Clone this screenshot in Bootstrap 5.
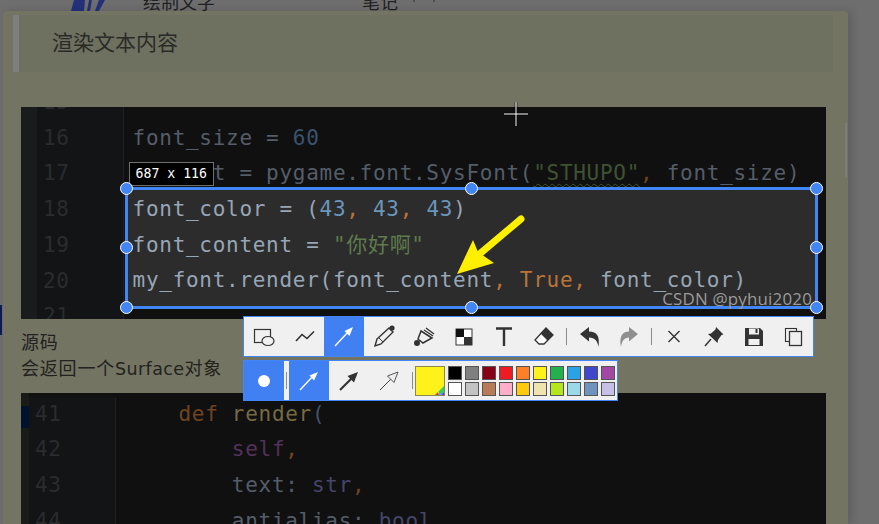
<!DOCTYPE html>
<html lang="zh">
<head>
<meta charset="utf-8">
<title>渲染文本内容</title>
<link href="https://cdn.jsdelivr.net/npm/bootstrap@5.3.0/dist/css/bootstrap.min.css" rel="stylesheet">
<style>
html,body{height:524px;overflow:hidden;}
body{background:#6e6e6e;font-family:"Liberation Sans","Noto Sans CJK SC",sans-serif;color:#252520;position:relative;}
.back-strip{height:11px;overflow:hidden;font-size:18px;line-height:18px;color:#222;}
.back-logo{width:34px;margin-left:71px;}
.back-a{margin-left:38px;margin-top:-6px;}
.back-b{margin-left:147px;margin-top:-6px;}
.back-c{margin-left:15px;margin-top:-9px;}
.sheet{margin-left:3px;width:845px;height:513px;background:#737462;border-radius:4px 4px 0 0;box-shadow:4px 0 8px rgba(0,0,0,.14);padding:4px 0 0 10px;position:relative;overflow:hidden;}
.quote-box{width:820px;height:57px;background:#6e7060;border-left:6px solid #7d7f80;padding-left:33px;font-size:21px;line-height:52px;color:#2a2b26;margin-bottom:35px;font-family:"Noto Sans CJK SC",sans-serif;font-weight:400;}
.code-box{margin-left:8px;width:805px;background:#101010;overflow:hidden;font-family:"DejaVu Sans Mono","Noto Sans CJK SC",monospace;font-size:21px;line-height:35.7px;letter-spacing:.71px;white-space:pre;color:#545d68;}
.code-one{height:212px;}
.code-two{height:132px;}
.strip-one{width:16px;background:#1a1b1d;}
.strip-two{width:8px;background:#1a1a17;position:relative;}
.strip-mark{height:22px;margin-top:13px;background:#02122c;}
.nums{background:#131415;border-right:1px solid #1f2021;color:#2a2c2e;}
.nums-one{width:87px;padding:0 0 0 6px;margin-top:-22px;}
.nums-two{width:87px;padding:0 0 0 6px;margin-top:3.5px;}
.code-one .body-lines{padding-left:8.6px;margin-top:-22px;}
.code-two .body-lines{padding-left:9px;margin-top:3.5px;}
.c-num{color:#3a536c;}
.c-str{color:#3f5233;text-decoration:underline wavy #3f5a2c 1px;text-underline-offset:3px;}
.c-or{color:#6f4420;}
.c-fn{color:#766a44;}
.c-pa{color:#41536a;}
.c-se{color:#55315a;}
.c-ty{color:#46456a;}
.text-block{font-size:18px;letter-spacing:.8px;line-height:26px;padding:9px 0 11px 8px;color:#22221e;font-family:"Noto Sans CJK SC",sans-serif;font-weight:400;}
.text-block .latin{font-family:"DejaVu Sans",sans-serif;font-size:17.5px;letter-spacing:.4px;}
.scroll-thumb{position:absolute;left:842px;top:112px;width:2px;height:54px;background:#7e7e78;}
.selection{position:absolute;left:125px;top:187px;width:693px;height:122px;border:3px solid #4285f4;background:#2c2c2c;font-family:"DejaVu Sans Mono","Noto Sans CJK SC",monospace;font-size:21px;line-height:35.7px;letter-spacing:.71px;white-space:pre;color:#98a5b4;padding:2px 0 0 4.6px;}
.s-num{color:#6a96bb;}
.s-or{color:#b9743a;}
.s-str{color:#5f7a4d;}
.watermark{position:absolute;right:3px;bottom:-5px;font-family:"Open Sans",sans-serif;font-size:16.9px;line-height:24px;letter-spacing:.2px;color:#9a9a9a;}
.handle{position:absolute;width:13px;height:13px;border-radius:50%;background:#4285f4;border:1.5px solid #fff;}
.size-tag{position:absolute;left:129px;top:162px;width:84.5px;height:24px;background:#000;border:1px solid #707070;color:#fff;font-family:"DejaVu Sans Mono",monospace;font-size:13.2px;line-height:22px;text-align:center;letter-spacing:0;}
.arrow-ink{position:absolute;left:440px;top:200px;}
.cross{position:absolute;left:504px;top:102px;}
.tool-bar{position:absolute;left:243px;background:#f0f0f0;border:1px solid #4285f4;}
.bar-top{top:316px;width:571px;height:41px;}
.bar-sub{top:360px;width:375px;height:41px;}
.tool{width:40px;height:39px;flex:none;}
.tool-on{background:#4080f2;}
.tool-narrow{width:38px;}
.tool-end{width:39px;overflow:hidden;}
.tool-sep{width:1px;height:17px;background:#8a8a8a;flex:none;}
.gap-l2{margin-left:2px;}
.gap-l3{margin-left:3px;}
.big-swatch{width:30px;height:30px;background:#fff21a;border:1px solid #8a8a50;position:relative;flex:none;overflow:hidden;}
.swatch-grid{display:grid;grid-template-columns:repeat(10,14px);grid-template-rows:14px 14px;gap:2px 3px;}
.swatch{border:1px solid #555;}
.edge-mark{position:absolute;left:0;top:305px;width:2px;height:30px;background:#101a52;}
</style>
</head>
<body>
<div class="back-strip d-flex">
  <svg class="back-logo flex-none" width="34" height="11" viewBox="0 0 34 11"><path d="M0 11 3 0H14L13 11ZM16 11 18 0H21L19 11ZM24 11 28 0H34L28 11Z" fill="#24307a"/></svg>
  <div class="back-a">绘制文字</div>
  <div class="back-b">笔记</div>
  <svg class="back-c" width="22" height="11" viewBox="0 0 22 11"><path d="M1 0V11M21 0V11M1 2H21M6 7H16" stroke="#333" fill="none"/></svg>
</div>
<div class="sheet">
  <div class="quote-box">渲染文本内容</div>
  <div class="code-box code-one d-flex">
    <div class="strip-one"></div>
    <div class="nums nums-one">15
16
17
18
19
20
21</div>
    <div class="body-lines">
font_size = <span class="c-num">60</span>
my_font = pygame.font.SysFont(<span class="c-str">"STHUPO"</span><span class="c-or">,</span> font_size)</div>
  </div>
  <div class="text-block">源码<br>会返回一个<span class="latin">Surface</span>对象</div>
  <div class="code-box code-two d-flex">
    <div class="strip-two"><div class="strip-mark"></div></div>
    <div class="nums nums-two">41
42
43
44</div>
    <div class="body-lines">    <span class="c-or">def</span> <span class="c-fn">render</span><span class="c-pa">(</span>
        <span class="c-se">self</span><span class="c-or">,</span>
        text: <span class="c-ty">str</span><span class="c-or">,</span>
        antialias: <span class="c-ty">bool</span></div>
  </div>
  <div class="scroll-thumb"></div>
</div>
<div class="edge-mark"></div>

<svg class="cross" width="24" height="24" viewBox="0 0 24 24"><path d="M12 0V24M0 12H24" stroke="#000" stroke-width="3" opacity=".55"/><path d="M12 0V24M0 12H24" stroke="#fff" stroke-width="1"/></svg>
<div class="size-tag">687 x 116</div>
<div class="selection">font_color = (<span class="s-num">43</span><span class="s-or">,</span> <span class="s-num">43</span><span class="s-or">,</span> <span class="s-num">43</span>)
font_content = <span class="s-str">"你好啊"</span>
my_font.render(font_content<span class="s-or">,</span> <span class="s-or">True,</span> font_color)<span class="watermark">CSDN @pyhui2020</span></div>
<span class="handle" style="left:120px;top:181.5px"></span>
<span class="handle" style="left:465px;top:181.5px"></span>
<span class="handle" style="left:810px;top:181.5px"></span>
<span class="handle" style="left:120px;top:241px"></span>
<span class="handle" style="left:810px;top:241px"></span>
<span class="handle" style="left:120px;top:300.5px"></span>
<span class="handle" style="left:465px;top:300.5px"></span>
<span class="handle" style="left:810px;top:300.5px"></span>
<svg class="arrow-ink" width="90" height="80" viewBox="440 200 90 80"><path d="M521 219 476 257" stroke="#ffef00" stroke-width="7" stroke-linecap="round" fill="none"/><path d="M457 274 473 240 478 252 494 263Z" fill="#ffef00"/></svg>

<div class="tool-bar bar-top d-flex align-items-center">
  <span class="tool d-flex"><svg width="40" height="39" viewBox="0 0 40 39"><rect x="10.5" y="12.5" width="16" height="13" fill="none" stroke="#333" stroke-width="1.2"/><ellipse cx="24" cy="24" rx="6" ry="4.5" fill="#f0f0f0" stroke="#333" stroke-width="1.2"/></svg></span>
  <span class="tool d-flex"><svg width="40" height="39" viewBox="0 0 40 39"><path d="M12 24 18 17.5 23 21.5 30 14.5" fill="none" stroke="#333" stroke-width="1.6"/></svg></span>
  <span class="tool tool-on d-flex"><svg width="40" height="39" viewBox="0 0 40 39"><path d="M11 29 25 14" stroke="#fff" stroke-width="1.4"/><path d="M29 10 20.5 14 25.5 19Z" fill="#fff"/></svg></span>
  <span class="tool d-flex"><svg width="40" height="39" viewBox="0 0 40 39"><path d="M13 22 25 11 29 15 17 27 11 29Z" fill="none" stroke="#333" stroke-width="1.4"/><circle cx="28" cy="11" r="2.6" fill="#333"/><path d="M15 21 19 25" stroke="#333"/></svg></span>
  <span class="tool d-flex"><svg width="40" height="39" viewBox="0 0 40 39"><path d="M17 14 28 21 19 26 14 22Z" fill="none" stroke="#333" stroke-width="1.5"/><path d="M22 11 30 17M20 13 29 19" stroke="#333" stroke-width="1.3"/><circle cx="13" cy="26" r="3" fill="#333"/></svg></span>
  <span class="tool d-flex"><svg width="40" height="39" viewBox="0 0 40 39"><rect x="12" y="12" width="16" height="16" fill="#fff" stroke="#333"/><rect x="12" y="12" width="8" height="8" fill="#111"/><rect x="20" y="20" width="8" height="8" fill="#333"/></svg></span>
  <span class="tool d-flex"><svg width="40" height="39" viewBox="0 0 40 39"><path d="M12 11.5H28M20 11.5V29" fill="none" stroke="#333" stroke-width="2.4"/></svg></span>
  <span class="tool d-flex"><svg width="40" height="39" viewBox="0 0 40 39"><path d="M22 11 29 18 20 27 15 27 11 23Z" fill="#fff" stroke="#333" stroke-width="1.3"/><path d="M22 11 29 18 23.5 23.5 16.5 16.5Z" fill="#333"/></svg></span>
  <span class="tool-sep gap-l2"></span>
  <span class="tool tool-narrow gap-l3 d-flex"><svg width="38" height="39" viewBox="0 0 38 39"><path d="M10 17 19 10V14.500C27 14.500 30 19 28.500 30 27.500 24 25 20.500 19 20.500V24.500Z" fill="#333"/></svg></span>
  <span class="tool d-flex"><svg width="40" height="39" viewBox="0 0 40 39"><path d="M30 17 21 10V14.500C14 14.500 11 20 13 30 14 24 16 20.500 21 20.500V24.500Z" fill="#8f8f8f"/></svg></span>
  <span class="tool-sep gap-l3"></span>
  <span class="tool d-flex gap-l2"><svg width="40" height="39" viewBox="0 0 40 39"><path d="M14.500 14 25.500 25M25.500 14 14.500 25" stroke="#333" stroke-width="1.4"/></svg></span>
  <span class="tool d-flex"><svg width="40" height="39" viewBox="0 0 40 39"><path d="M22 10 29.500 17.500 27.500 18 24 23 23.500 26 14 17 17 16.500 21.500 12.500Z" fill="#333"/><path d="M17 22 11 29" stroke="#333" stroke-width="1.500"/></svg></span>
  <span class="tool d-flex"><svg width="40" height="39" viewBox="0 0 40 39"><path d="M11 11H26L29 14V29H11Z" fill="#333"/><rect x="15" y="11.500" width="10" height="6" fill="#f0f0f0"/><rect x="21.500" y="12" width="2" height="4" fill="#333"/><rect x="14.500" y="22" width="11" height="6" fill="#f0f0f0"/></svg></span>
  <span class="tool tool-end d-flex"><svg width="39" height="39" viewBox="0 0 39 39"><rect x="11.500" y="11.500" width="11" height="13" fill="none" stroke="#333" stroke-width="1.100"/><rect x="15.500" y="14.500" width="12" height="14" fill="#f0f0f0" stroke="#333" stroke-width="1.300"/></svg></span>
</div>

<div class="tool-bar bar-sub d-flex align-items-center">
  <span class="tool tool-on d-flex"><svg width="40" height="39" viewBox="0 0 40 39"><circle cx="20" cy="20" r="6" fill="#fff"/></svg></span>
  <span class="tool-sep gap-l2"></span>
  <span class="tool tool-on d-flex gap-l2"><svg width="40" height="39" viewBox="0 0 40 39"><path d="M11 29 25 14" stroke="#fff" stroke-width="1.4"/><path d="M29 11 20.500 14.500 25 19.500Z" fill="#fff"/></svg></span>
  <span class="tool d-flex"><svg width="40" height="39" viewBox="0 0 40 39"><path d="M11 29 23 17" stroke="#333" stroke-width="2.200"/><path d="M29 11 18.500 15 25 21.500Z" fill="#333"/></svg></span>
  <span class="tool d-flex"><svg width="40" height="39" viewBox="0 0 40 39"><path d="M11 29 23 17" stroke="#444" stroke-width="1"/><path d="M29 11 18.500 15 25 21.500Z" fill="#f0f0f0" stroke="#444" stroke-width=".9"/></svg></span>
  <span class="tool-sep gap-l3"></span>
  <span class="big-swatch gap-l2"><svg width="30" height="30" viewBox="0 0 30 30"><path d="M19 30 30 19V23L23 30Z" fill="#2fb7ff"/><path d="M23 30 30 23V26L26 30Z" fill="#7a2cff"/><path d="M14 30 30 14V19L19 30Z" fill="#fff21a"/><path d="M17 30 22 25 23 30Z" fill="#e33"/><path d="M22 25 30 17V22L25 27Z" fill="#3ecb5c"/></svg></span>
  <div class="swatch-grid gap-l3">
    <span class="swatch" style="background:#000"></span><span class="swatch" style="background:#7f7f7f"></span><span class="swatch" style="background:#880015"></span><span class="swatch" style="background:#ed1c24"></span><span class="swatch" style="background:#ff7f27"></span><span class="swatch" style="background:#fff21a"></span><span class="swatch" style="background:#22b14c"></span><span class="swatch" style="background:#2ba2e8"></span><span class="swatch" style="background:#3f48cc"></span><span class="swatch" style="background:#a349a4"></span>
    <span class="swatch" style="background:#fff"></span><span class="swatch" style="background:#c3c3c3"></span><span class="swatch" style="background:#b97a57"></span><span class="swatch" style="background:#ffaec9"></span><span class="swatch" style="background:#ffc90e"></span><span class="swatch" style="background:#efe4b0"></span><span class="swatch" style="background:#b5e61d"></span><span class="swatch" style="background:#99d9ea"></span><span class="swatch" style="background:#7092be"></span><span class="swatch" style="background:#c8bfe7"></span>
  </div>
</div>
<script src="https://cdn.jsdelivr.net/npm/bootstrap@5.3.0/dist/js/bootstrap.bundle.min.js"></script>
</body>
</html>
